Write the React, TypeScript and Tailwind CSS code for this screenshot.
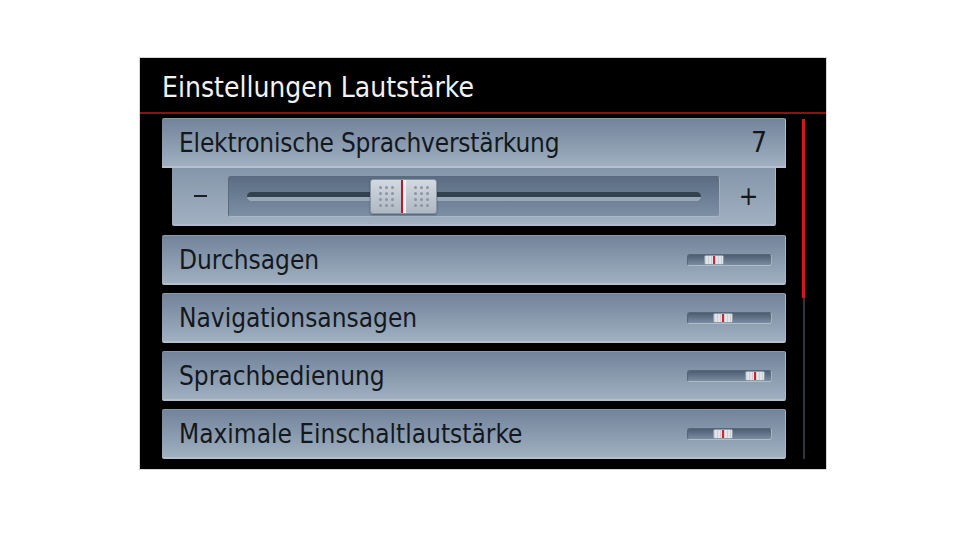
const font = { fontFamily: "'DejaVu Sans Condensed', 'DejaVu Sans', sans-serif" };

const rows = [
  { label: "Durchsagen", pos: 16 },
  { label: "Navigationsansagen", pos: 25 },
  { label: "Sprachbedienung", pos: 57 },
  { label: "Maximale Einschaltlautstärke", pos: 25 },
];

function Dots() {
  return (
    <div className="grid grid-cols-3 gap-x-[3px] gap-y-[3px]">
      {Array.from({ length: 12 }).map((_, i) => (
        <span key={i} className="w-[3px] h-[3px] rounded-full bg-[#8a96a4]" />
      ))}
    </div>
  );
}

function BigThumb({ left }: { left: number }) {
  return (
    <div
      className="absolute top-[2px] h-[35px] w-[67px] flex rounded-[3px] border border-[#8796a6] bg-linear-to-b from-[#d3d9e0] to-[#aeb8c4] shadow-[0_1px_2px_rgba(0,0,0,0.35)]"
      style={{ left }}
    >
      <div className="flex-1 flex items-center justify-center">
        <Dots />
      </div>
      <div className="w-[2px] bg-[#c8141c]" />
      <div className="w-[3px] bg-[#eef2f6]" />
      <div className="flex-1 flex items-center justify-center">
        <Dots />
      </div>
    </div>
  );
}

function MiniSlider({ pos }: { pos: number }) {
  return (
    <div className="relative w-[85px] h-[12px] rounded-[3px] border border-[#56677a] border-b-[#b0bdca] border-r-[#a3b1c0] bg-linear-to-b from-[#4d5e71] to-[#7a8ca1]">
      <div
        className="absolute top-0 h-[10px] w-[20px] flex rounded-[2px] bg-linear-to-b from-[#e4e8ed] to-[#b9c3ce] border border-[#8e9bab]"
        style={{ left: pos }}
      >
        <div className="flex-1 bg-[repeating-linear-gradient(90deg,#c9d0d8_0_1px,#e1e5ea_1px_3px)]" />
        <div className="w-[2px] bg-[#d0232b]" />
        <div className="flex-1 bg-[repeating-linear-gradient(90deg,#c9d0d8_0_1px,#e1e5ea_1px_3px)]" />
      </div>
    </div>
  );
}

function Row({ label, pos }: { label: string; pos: number }) {
  return (
    <div className="h-[50px] flex items-center justify-between pl-[17px] pr-[13px] rounded-[2px] border-t border-t-[#8a9aad] border-b-2 border-b-[#b4c0cc] border-r border-r-[#a9b6c4] bg-linear-to-b from-[#72849b] to-[#a0b0c1]">
      <span className="text-[26px] leading-none text-[#14181d]" style={font}>
        {label}
      </span>
      <MiniSlider pos={pos} />
    </div>
  );
}

export default function App() {
  return (
    <div className="w-[960px] h-[540px] bg-white pt-[58px] pl-[140px]">
      <div className="w-[686px] h-[411px] bg-black flex flex-col outline outline-1 outline-[#d6d6d6]">
        <div className="h-[54px] pl-[22px] pt-[15px]">
          <h1 className="text-[28px] leading-[30px] text-[#f2f2f2]" style={font}>
            Einstellungen Lautstärke
          </h1>
        </div>
        <div className="h-[2px] bg-[#861414]" />

        <div className="flex pt-[4px] pl-[22px]">
          <div className="w-[624px] flex flex-col">
            {/* Elektronische Sprachverstärkung, opened */}
            <div className="h-[50px] flex items-center justify-between pl-[17px] pr-[18px] rounded-t-[2px] border-t border-t-[#8a9aad] border-r border-r-[#b0bdca] border-b-2 border-b-[#b4c0cc] bg-linear-to-b from-[#72849b] to-[#a0b0c1]">
              <span className="text-[26px] leading-none text-[#14181d] tracking-[-0.2px]" style={font}>
                Elektronische Sprachverstärkung
              </span>
              <span className="text-[28px] leading-none text-[#14181d]" style={font}>
                7
              </span>
            </div>
            <div className="ml-[10px] mr-[10px] h-[58px] flex items-center rounded-b-[2px] border-r border-r-[#aab7c5] border-b-2 border-b-[#b0bccb] bg-linear-to-b from-[#8596ab] to-[#a1b0c1]">
              <div className="w-[56px] flex justify-center">
                <span className="block w-[13px] h-[2px] bg-[#1a1e24]" />
              </div>
              <div className="relative w-[492px] h-[41px] rounded-[3px] border border-[#5a6b7e] border-b-[#a9b7c6] border-r-[#a2b1c1] bg-linear-to-b from-[#5b6d82] to-[#7d8fa4] flex items-center px-[18px]">
                <div className="w-full h-[9px] rounded-full bg-linear-to-b from-[#34414f] from-50% to-[#98a8b8] to-50%" />
                <BigThumb left={141} />
              </div>
              <div className="flex-1 flex justify-center text-[26px] leading-none text-[#14181d] pl-[2px]" style={font}>
                +
              </div>
            </div>

            <div className="mt-[9px] flex flex-col gap-[8px]">
              {rows.map((r) => (
                <Row key={r.label} label={r.label} pos={r.pos} />
              ))}
            </div>
          </div>

          {/* scroll bar */}
          <div className="ml-[16px] mt-[1px] w-[3px] h-[340px] flex flex-col">
            <div className="h-[179px] bg-[#d01820]" />
            <div className="flex-1 mx-[0.5px] bg-[#2f353c]" />
          </div>
        </div>
      </div>
    </div>
  );
}
